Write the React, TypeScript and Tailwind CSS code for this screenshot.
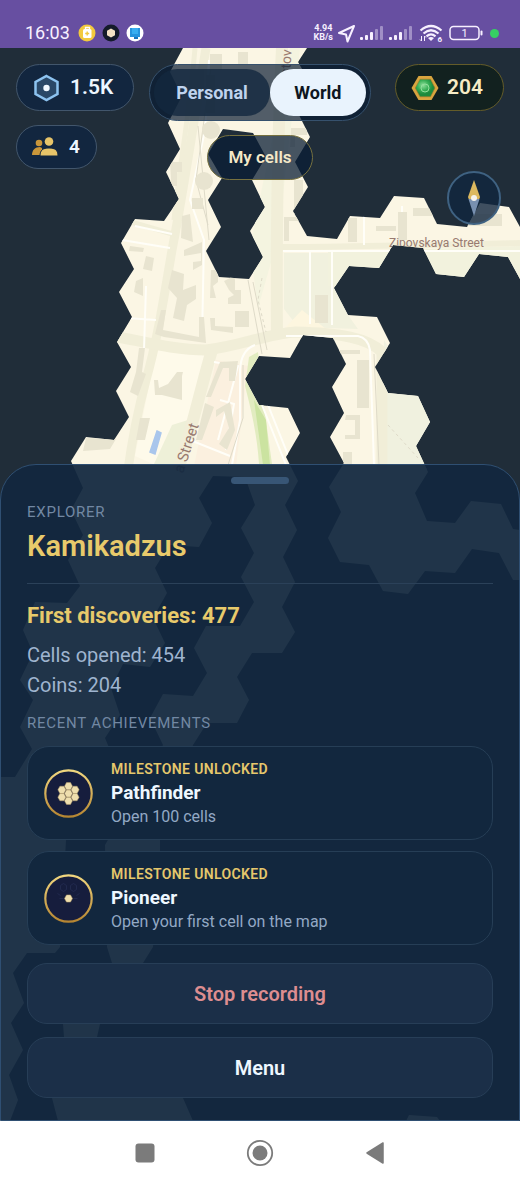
const FOG_EDGE =
  "M183 48 307 48 298 62 312 86 297 111 310 137 295 162 308 187 293 211 307 236 337 239 350 216 380 218 394 196 424 198 437 224 467 227 480 203 509 207 520 227 " +
  "520 279 508 257 479 254 464 277 436 274 423 248 393 245 379 268 349 266 334 288 348 315 377 317 390 343 375 367 388 393 418 396 430 422 416 446 428 472 415 493 427 521 455 523 471 501 501 504 513 529 520 530 " +
  "520 580 513 580 499 553 472 549 455 573 425 571 408 594 383 591 369 565 340 562 328 538 341 512 329 487 344 463 330 437 344 413 332 387 346 364 333 338 303 335 290 358 259 356 245 379 259 405 288 408 300 433 286 457 " +
  "298 481 285 505 297 530 283 557 295 582 282 607 295 632 282 653 252 653 237 677 249 700 237 723 207 723 193 745 160 840 160 852 153 947 143 963 100 1024 97 1037 183 1098 193 1121 " +
  "58 1121 52 1098 64 1037 63 1024 112 963 107 947 105 845 163 745 150 718 163 694 193 696 207 673 194 648 206 626 240 626 254 602 241 577 254 553 241 528 255 505 245 477 213 476 " +
  "199 498 212 523 199 547 169 545 155 568 167 593 153 618 165 643 150 667 123 664 111 688 120 715 105 738 110 750 66 840 60 947 55 953 27 953 13 973 24 1003 11 1023 23 1050 9 1075 18 1100 10 1121 0 1121 " +
  "0 777 15 777 32 749 20 727 33 700 20 680 33 653 23 630 35 602 67 603 80 586 68 560 83 535 71 510 83 488 71 461 86 437 114 440 129 417 116 391 131 367 117 342 132 317 119 292 134 269 121 243 135 219 164 221 179 199 166 172 180 149 168 123 182 96 170 72Z " +
  "M223 129 253 133 266 157 252 180 265 207 250 231 263 257 249 279 219 277 206 251 221 227 208 200 222 178 208 154Z " +
  "M406 1121 409 1115 437 1117 440 1121Z";

const HEX_RING = [
  [0, 0],
  [0, -7],
  [6, -3.5],
  [6, 3.5],
  [0, 7],
  [-6, 3.5],
  [-6, -3.5],
];

const achievements = [
  { title: "Pathfinder", text: "Open 100 cells", cells: 7 },
  { title: "Pioneer", text: "Open your first cell on the map", cells: 1 },
];

function WorldMap() {
  return (
    <svg
      className="absolute inset-0 w-full h-full"
      viewBox="0 48 520 1073"
      preserveAspectRatio="xMidYMin slice"
      aria-hidden="true"
    >
      <defs>
        <clipPath id="explored">
          <path d={FOG_EDGE} clipRule="evenodd" />
        </clipPath>
      </defs>
      <rect x="0" y="48" width="520" height="1073" fill="#202d39" />
      <g clipPath="url(#explored)">
        <rect x="0" y="48" width="520" height="1073" fill="#fbf6e4" />
        {/* parks and yards */}
        <path d="M284 253h44l6 35 14 27 10 14-60-2-14-18Z" fill="#f1f1de" />
        <path d="M328 250h70l122-4v40H328Z" fill="#f2f2dd" />
        <path d="M290 48h10l-22 190-20 70-8-60 20-100Z" fill="#f4f4e0" />
        <path d="M384 340l50 80-5 50h-48Z" fill="#f0f1df" />
        <path d="M157 346l50 10-20 108h-34l-18-8Z" fill="#fefaea" />
        <path d="M172 425l16-5-8 44h-26Z" fill="#eef0d8" />
        <path d="M216 360l32 6-12 100h-42Z" fill="#fbf0df" />
        <path d="M249 357l9-5 4 40 10 72h-13c-2-30-8-55-14-78Z" fill="#e2ecc0" />
        <path d="M254 400l12 20 4 45h-7Z" fill="#cbe3a0" />
        <path d="M302 310l24 19-17 1-24-2Z" fill="#fdf6df" />
        {/* streets */}
        <g fill="none" stroke="#f1eed8" strokeLinecap="butt">
          <path d="M206 48C194 120 182 200 172 250C162 310 156 345 146 380C138 410 132 440 128 470" strokeWidth="9" />
          <path d="M282 48C278 130 276 220 277 336" strokeWidth="12" />
          <path d="M118 337C145 342 175 350 206 350C240 346 266 334 296 332C340 333 368 338 382 352V470" strokeWidth="11" />
          <path d="M280 247C340 247 430 245 520 243" strokeWidth="6" />
          <path d="M212 350C200 390 192 430 178 470" strokeWidth="12" />
          <path d="M131 222L176 235M195 48C189 120 180 160 174 220" strokeWidth="5" />
        </g>
        <g fill="none" stroke="#fffef8" strokeWidth="2">
          <path d="M209 60L205 130L190 200L204 240L202 340M146 286L144 350M126 318L156 320" />
          <path d="M310 252V324M332 252V325M283 251H520M286 336H358Q368 338 370 350L374 465" />
          <path d="M255 345Q241 350 240 370V420L232 465M262 405L286 465M268 405L292 465" />
          <path d="M214 362L238 366L218 440M220 400L234 404L226 450M190 440L230 456" />
          <path d="M135 226L172 234M122 240L170 248M338 205V235M364 208V245M402 206V240" />
        </g>
        <g fill="none" stroke="#dedac8" strokeWidth="1">
          <path d="M248 280L262 354M253 282L267 350M243 365V418L228 465M374 354L379 465" />
          <path d="M262 278L258 300L266 332M388 425L418 458" strokeDasharray="3 3" />
          <path d="M212 60L196 180L208 225M198 126L209 240" />
        </g>
        {/* buildings */}
        <g fill="#e8e4d0">
          <path d="M190 70h14v24h-14zM206 75h9v38h-9zM210 54h12v16h-12zM238 52h10v12h-10z" />
          <path d="M170 162h12v10h-5v14h-10v-6h4zM192 198h11v11h-11zM182 216l8-2 3 28-12-4z" />
          <circle cx="211" cy="130" r="9" />
          <circle cx="204" cy="181" r="9" />
          <path d="M146 256l8 2-2 13-9-2zM136 281l7-3v18l-9-4zM130 246l14 2-1 4-14-1z" />
          <path d="M184 250l18-8v23l-9 5v-8l8-1v-8l-17 3z" />
          <path d="M172 270l12 4-1 16 13-5v14l-9 6-3 16-11-3 4-20-9-10z" />
          <path d="M161 310h5l-3 20 36 7v-20h5l2 26-42-6-9-3Z" />
          <path d="M211 270h7v12l-5 4 3 12h-6zM224 281l6-3v-8h5v20h6v14h-13v-6l6-3-5-5z" />
          <path d="M235 311h14v16h-14zM210 318h5v8l18 1v6l-22-3z" />
          <path d="M177 372h6l-1 4 0 24-20-5h-7l-1-15h4l1 8 9-4z" />
          <path d="M139 348h6l-3 24 4 2-8 22-8-4 6-20zM140 418h10l-5 22h-9zM86 438l30 1-6 10-27 2z" />
          <path d="M220 362l18-1-3 20h-6v-13h-6l-12 29h-5z" />
          <path d="M205 403l9 4-12 33h-6zM216 410l14-8 5 28-8 20-8-6 10-16-5-17-8 6z" />
          <path d="M315 295h13v28h-13zM398 212h9v28h-9zM413 208h22v8h-22zM348 218h9v24h-9z" />
          <path d="M357 360h12v48h-12zM346 415h14v24h-15v-4h10v-15h-10zM343 452h9v14h-9z" />
          <path d="M294 180h9v34h-9zM291 128h16v7h-12v12h-5zM440 214h62v12h-42z" />
          <path d="M284 217h17v4h-12v20h-5zM360 350h-29v4h29zM376 226h20v5h-20z" />
        </g>
        <path d="M157 431l4 2-6 21-5-2Z" fill="#a9c6ec" stroke="#a9c6ec" strokeWidth="1.5" />
        <g fill="#987a70" className="font-['Roboto',sans-serif]" fontSize="12">
          <text x="389" y="247">Zipovskaya Street</text>
          <text transform="translate(183 474) rotate(-72)" fontSize="15">
            a Street
          </text>
          <text transform="translate(290 76) rotate(-86)" fontSize="14">
            stov
          </text>
        </g>
      </g>
    </svg>
  );
}

function SignalBars() {
  return (
    <svg width="24" height="16" viewBox="0 0 24 16" fill="#f7f0ff" aria-hidden="true">
      <rect x="0" y="12" width="3" height="3" rx="1" />
      <rect x="5" y="10" width="3" height="5" rx="1" />
      <rect x="10" y="7" width="3" height="8" rx="1" />
      <rect x="15" y="4" width="3" height="11" rx="1" opacity=".4" />
      <rect x="20" y="1" width="3" height="14" rx="1" opacity=".4" />
    </svg>
  );
}

function StatusBar() {
  return (
    <header className="flex h-12 items-end justify-between bg-[#674fa1] pl-[25px] pr-[21px] pb-1 text-[#f7f0ff]">
      <div className="flex h-[22px] items-center gap-2">
        <span className="text-[18px] leading-[22px]">16:03</span>
        <svg width="66" height="18" viewBox="0 0 66 18" aria-hidden="true">
          <circle cx="9" cy="9" r="8.5" fill="#f2c93d" />
          <rect x="5" y="5" width="8.5" height="9" rx="1.5" fill="#fff" />
          <path d="M7.5 5V3.5h4V5" fill="none" stroke="#fff" strokeWidth="1.3" />
          <path d="M9.2 7.5v4M7.2 9.5h4" stroke="#f2c93d" strokeWidth="1.4" />
          <circle cx="33" cy="9" r="8.5" fill="#141b2b" />
          <path d="M33 4.5l4 2.2v4.6l-4 2.2-4-2.2V6.7Z" fill="#f3e2c6" />
          <circle cx="57" cy="9" r="8.5" fill="#fff" />
          <path d="M52 4h10v9H52Z" fill="#2694dd" />
          <path d="M54 4h6v6h-6Z" fill="#38aef0" />
          <path d="M56 13h4v2h-4Z" fill="#1674bd" />
        </svg>
      </div>
      <div className="flex h-[22px] items-center gap-1">
        <span className="text-center text-[9px] leading-[9px] font-bold">
          4.94
          <br />
          KB/s
        </span>
        <svg width="19" height="19" viewBox="0 0 19 19" fill="none" stroke="currentColor" strokeWidth="2" strokeLinejoin="round" aria-hidden="true">
          <path d="M17 2 2 9l7 1.5 1.5 7Z" />
        </svg>
        <span className="flex gap-[5px]">
          <SignalBars />
          <SignalBars />
        </span>
        <svg className="ml-0.5" width="24" height="18" viewBox="0 0 24 18" aria-hidden="true">
          <g fill="none" stroke="currentColor" strokeWidth="2.2">
            <path d="M1.5 6.5Q12-2.5 22.5 6.5" />
            <path d="M4.5 9.5Q12 3 19.5 9.5" />
            <path d="M7.5 12.3Q12 8.5 16.5 12.3" />
          </g>
          <path d="M9 14q3-2 6 0l-3 3Z" fill="currentColor" />
          <path d="M2.5 12v5l-1.500-1.500M5.500 17v-5l1.500 1.500" fill="none" stroke="currentColor" />
          <text x="18.5" y="17.5" fontSize="8" fontWeight="700" fill="currentColor">6</text>
        </svg>
        <svg className="ml-0.5" width="35" height="16" viewBox="0 0 35 16" aria-hidden="true">
          <rect x="1" y="1.5" width="29" height="13" rx="3.5" fill="none" stroke="currentColor" strokeWidth="1.5" />
          <rect x="31.5" y="5.5" width="2" height="5" rx="1" fill="currentColor" />
          <text x="15.5" y="12" fontSize="11" textAnchor="middle" fill="currentColor">1</text>
        </svg>
        <span className="ml-0.5 size-[9px] rounded-full bg-[#36d063]" />
      </div>
    </header>
  );
}

function MapControls() {
  return (
    <div className="relative grid min-h-[416px] grid-cols-[1fr_auto_1fr] items-start px-4 pt-4 font-semibold">
      <div className="flex flex-col items-start gap-[14px]">
        <div className="flex h-[47px] items-center gap-[10px] rounded-full border border-[#42566c] bg-[#12263f] pl-4 pr-5 text-[21px] text-[#eef7ff]">
          <svg width="27" height="28" viewBox="0 0 27 28" aria-hidden="true">
            <path d="M13.5 2 24.5 8v12l-11 6-11-6V8Z" fill="#2a4867" stroke="#8dc3f0" strokeWidth="2.5" />
            <circle cx="13.5" cy="14" r="3.2" fill="#f0f8ff" />
          </svg>
          1.5K
        </div>
        <div className="flex h-11 items-center gap-[10px] rounded-full border border-[#42566c] bg-[#12263f] pl-[14px] pr-4 text-[19px] text-[#eef7ff]">
          <svg width="28" height="22" viewBox="0 0 28 22" aria-hidden="true">
            <circle cx="8" cy="7" r="3.3" fill="#c9963a" />
            <path d="M1 19c0-5 3-8 8-8l2 1v7Z" fill="#c9963a" />
            <circle cx="18" cy="5.500" r="4.3" fill="#e7c469" />
            <path d="M9 20c0-6 3-8 9-8s9 2 9 8Z" fill="#e7c469" stroke="#12263f" strokeWidth="1" />
          </svg>
          4
        </div>
      </div>

      <div className="flex flex-col items-center gap-[14px]">
        <div className="flex rounded-full border border-[#36516d] bg-[#0a1d33]/70 p-1 text-[18px] font-bold">
          <button type="button" className="h-[47px] rounded-full bg-[#13283e]/80 px-[22px] text-[#bfd3ee]">
            Personal
          </button>
          <button type="button" aria-pressed="true" className="h-[47px] min-w-24 rounded-full bg-[#e9f3fd] px-6 text-[#0e1621]">
            World
          </button>
        </div>
        <button type="button" className="h-[45px] rounded-full border border-[#77713f] bg-[#0a1d36]/75 px-5 text-[17px] text-[#f4e8c8]">
          My cells
        </button>
      </div>

      <div className="flex flex-col items-end gap-[60px]">
        <div className="flex h-[47px] items-center gap-2 rounded-full border border-[#645c29] bg-[#12211f] pl-[15px] pr-5 text-[21px] text-[#f6ecc6]">
          <svg width="28" height="26" viewBox="0 0 28 26" aria-hidden="true">
            <defs>
              <radialGradient id="gem" cx=".4" cy=".35">
                <stop stopColor="#8fe09a" />
                <stop offset=".6" stopColor="#35ad54" />
                <stop offset="1" stopColor="#1c8a3c" />
              </radialGradient>
            </defs>
            <path d="M7.5 1h13l7 12-7 12h-13L.5 13Z" fill="#d9a53f" />
            <path d="M9 4.200h10.500L24 13l-4.500 8.800H9L4.200 13Z" fill="url(#gem)" stroke="#a8782c" strokeWidth=".6" />
            <circle cx="14" cy="13" r="4" fill="none" stroke="#92df9c" />
          </svg>
          204
        </div>
        <button
          type="button"
          aria-label="Compass"
          className="mr-[3px] flex size-[54px] items-center justify-center rounded-full border-2 border-[#3f6282] bg-[#10263e]/80"
        >
          <svg width="14" height="38" viewBox="0 0 14 38" aria-hidden="true">
            <path d="M7 1l6 17a6 4 0 0 1-12 0Z" fill="#dcb95f" />
            <path d="M1.500 20h11L7 37Z" fill="#7890b0" />
            <circle cx="7" cy="19" r="3" fill="#f6f3ec" />
          </svg>
        </button>
      </div>
    </div>
  );
}

function Badge({ cells }: { cells: number }) {
  return (
    <svg className="shrink-0" width="49" height="49" viewBox="-24.5 -24.5 49 49" aria-hidden="true">
      <defs>
        <linearGradient id={`gold-${cells}`} x2="0" y2="1">
          <stop stopColor="#f1d77f" />
          <stop offset="1" stopColor="#b68632" />
        </linearGradient>
      </defs>
      <circle r="23.2" fill="#161d3d" stroke={`url(#gold-${cells})`} strokeWidth="2.2" />
      {cells === 1 && (
        <path d="M-5-7l-3-2v-4l3-2 3 2v4ZM5-7l-3-2v-4l3-2 3 2v4ZM-8-3l-3-2M8-3l3-2M-5 0h-4M5 0h4" fill="none" stroke="#252c52" strokeWidth=".8" />
      )}
      {HEX_RING.slice(0, cells).map(([x, y]) => (
        <path
          key={`${x},${y}`}
          transform={`translate(${x * 1.1} ${y * 1.05})`}
          d="M-4 0-2-3.600H2L4 0 2 3.600H-2Z"
          fill="#efdfae"
          stroke="#b39a68"
          strokeWidth=".5"
        />
      ))}
    </svg>
  );
}

function ProfileSheet() {
  return (
    <section className="relative rounded-t-[36px] border border-[#2f4f72] bg-[#12273f]/94 px-[26px] pt-3 pb-[22px]">
      <div className="mx-auto h-[7px] w-[58px] rounded-full bg-[#385676]" />
      <p className="mt-[18px] text-[15px] leading-5 tracking-wider text-[#7288a3]">EXPLORER</p>
      <h1 className="mt-1.5 text-[29px] leading-9 font-semibold text-[#e8ca6b]">Kamikadzus</h1>
      <hr className="mt-[19px] border-[#2b4159]" />
      <p className="mt-[18px] text-[22px] leading-7 font-bold text-[#e8ca6b]">First discoveries: 477</p>
      <p className="mt-[10px] text-[20px] leading-[30px] text-[#9fb4cf]">Cells opened: 454</p>
      <p className="text-[20px] leading-[30px] text-[#9fb4cf]">Coins: 204</p>
      <h2 className="mt-[13px] text-[15px] leading-5 tracking-wider text-[#7288a3]">RECENT ACHIEVEMENTS</h2>

      <ul className="mt-[13px] space-y-[11px]">
        {achievements.map((item) => (
          <li key={item.title} className="flex items-center gap-[18px] rounded-[22px] border border-[#263e56] bg-[#12273e] px-4 py-3">
            <Badge cells={item.cells} />
            <div>
              <p className="text-[14px] leading-5 font-semibold tracking-wide text-[#e5c76c]">MILESTONE UNLOCKED</p>
              <h3 className="text-[19px] leading-7 font-bold text-[#eef7ff]">{item.title}</h3>
              <p className="text-[16px] leading-5 text-[#93a9c5]">{item.text}</p>
            </div>
          </li>
        ))}
      </ul>

      <div className="mt-[18px] flex flex-col gap-[13px] text-[20px] font-semibold">
        <button type="button" className="h-[61px] rounded-[20px] border border-[#273e57] bg-[#1b2f48] text-[#dd8d90]">
          Stop recording
        </button>
        <button type="button" className="h-[61px] rounded-[20px] border border-[#273e57] bg-[#1b2f48] text-[#eef7ff]">
          Menu
        </button>
      </div>
    </section>
  );
}

function NavigationBar() {
  return (
    <nav className="flex h-[63px] items-center justify-center gap-[75px] bg-white text-[#7b7b7b]">
      <button type="button" aria-label="Recent apps" className="flex w-10 justify-center">
        <svg width="20" height="20" viewBox="0 0 20 20" fill="currentColor">
          <rect x=".5" y=".5" width="19" height="19" rx="3" />
        </svg>
      </button>
      <button type="button" aria-label="Home" className="flex w-10 justify-center">
        <svg width="28" height="28" viewBox="0 0 28 28" fill="currentColor">
          <circle cx="14" cy="14" r="12.2" fill="none" stroke="currentColor" strokeWidth="1.8" />
          <circle cx="14" cy="14" r="7.5" />
        </svg>
      </button>
      <button type="button" aria-label="Back" className="flex w-10 justify-center">
        <svg width="20" height="24" viewBox="0 0 20 24" fill="currentColor" stroke="currentColor" strokeWidth="1.5" strokeLinejoin="round">
          <path d="M18 2v20L2 12Z" />
        </svg>
      </button>
    </nav>
  );
}

export default function App() {
  return (
    <div className="min-h-screen bg-white font-['Roboto',sans-serif]">
      <StatusBar />
      <main className="relative overflow-hidden bg-[#202d39]">
        <WorldMap />
        <MapControls />
        <ProfileSheet />
      </main>
      <NavigationBar />
    </div>
  );
}
